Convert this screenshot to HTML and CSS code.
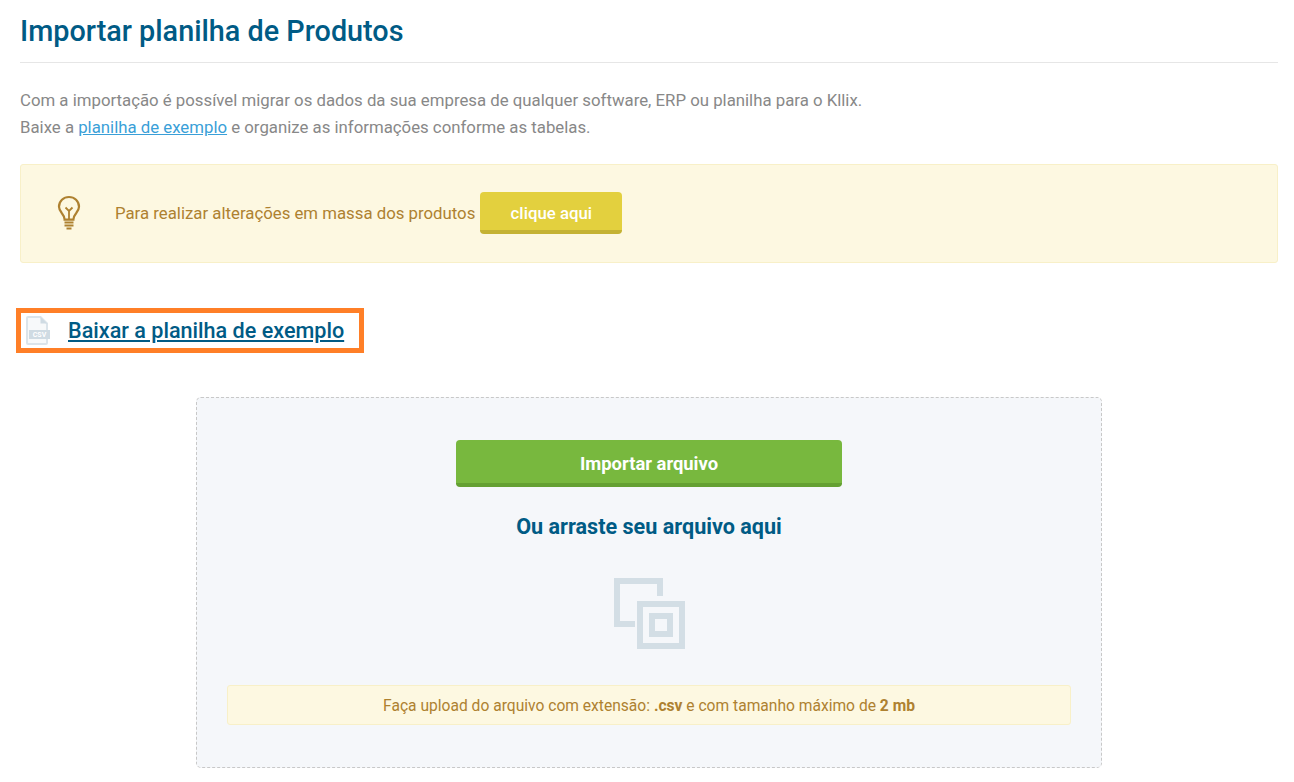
FILE: index.html
```html
<!DOCTYPE html>

<html lang="pt-BR">

<head>
	<meta charset="UTF-8">
	<title>Importar planilha de Produtos</title>
	<link rel="stylesheet" href="styles.css">
</head>

<body>

	<h1 class="page-title">Importar planilha de Produtos</h1>

	<p class="intro">
		Com a importação é possível migrar os dados da sua empresa de qualquer software, ERP ou planilha para o Kllix.
		<br/>
		Baixe a <a href="#">planilha de exemplo</a> e organize as informações conforme as tabelas.
	</p>

	<div class="tip">
		<svg class="tip-icon" xmlns="http://www.w3.org/2000/svg" width="26" height="36" viewBox="0 0 26 36" fill="none" stroke="currentColor">
			<path stroke-width="2.2" d="M8.600 24.600c0-3.200-1.200-4.600-3-6.800C4.200 16 3 14.200 3 11.800 3 6.200 7.500 2 13 2s10 4.200 10 9.800c0 2.400-1.200 4.200-2.600 6-1.800 2.200-3 3.600-3 6.800z"/>
			<path stroke-width="1.800" d="M13 24.500v-9M9.500 12.500l3.500 3.500 3.500-3.500"/>
			<path stroke-width="2" d="M8.500 27.500h9M8.500 30.500h9M10.500 33.500h5"/>
		</svg>
		<span>Para realizar alterações em massa dos produtos</span>
		<a href="#" class="btn btn-yellow">clique aqui</a>
	</div>

	<div class="download">
		<svg xmlns="http://www.w3.org/2000/svg" width="24" height="29" viewBox="0 0 24 29">
			<path d="M2 1h12.500l6.500 6.500V27a1 1 0 0 1-1 1H2a1 1 0 0 1-1-1V2a1 1 0 0 1 1-1z" fill="#f7f9fa" stroke="#dbe4ea" stroke-width="2"/>
			<path d="M14.500 1v6.500H21z" fill="#cfdbe3"/>
			<rect x="3" y="14" width="21" height="9" fill="#cfdbe3"/>
			<text x="13.500" y="21.300" class="csv-label">CSV</text>
		</svg>
		<a href="#">Baixar a planilha de exemplo</a>
	</div>

	<div class="dropzone">
		<a href="#" class="btn btn-green">Importar arquivo</a>
		<h2>Ou arraste seu arquivo aqui</h2>
		<svg class="drop-icon" xmlns="http://www.w3.org/2000/svg" width="71" height="71" viewBox="0 0 71 71" fill="none" stroke="#d3dee5" stroke-width="6">
			<path d="M46 18V3H3v43h18"/>
			<rect x="26" y="26" width="42" height="42"/>
			<rect x="38" y="38" width="18" height="18"/>
		</svg>
		<div class="notice">Faça upload do arquivo com extensão: <b>.csv</b> e com tamanho máximo de <b>2 mb</b></div>
	</div>

</body>

</html>
```

FILE: styles.css
```css
*, *:after, *:before { box-sizing: border-box; }
html, body { margin: 0; padding: 0; }
body { padding: 0 16px 14px 20px; font-family: Roboto, sans-serif; font-size: 16.8px; color: #888; background: #fff; }

/* header */
.page-title { margin: 0; padding: 13px 0 12px; font-size: 28.8px; line-height: 37px; font-weight: 500; color: #005b85; border-bottom: 1px solid #e6e6e6; }
.intro { margin: 24px 0 23px; line-height: 27px; }
.intro a { color: #3a9fd8; }

/* tip */
.tip { display: flex; align-items: center; height: 99px; padding: 0 0 1px 35px; color: #ae8130; background: #fdf8e1; border: 1px solid #f8f0c8; border-radius: 3px; }
.tip-icon { margin-right: 33px; }
.tip span { margin-right: 5px; }

/* buttons */
.btn { display: block; color: #fff; font-weight: 700; text-align: center; text-decoration: none; border-radius: 4px; }
.btn-yellow { width: 142px; height: 42px; line-height: 42px; font-size: 16.8px; font-weight: 500; background: #e3d03e; border-bottom: 4px solid #c4b234; }
.btn-green { width: 386px; height: 47px; line-height: 47px; font-size: 18.4px; background: #78b83e; border-bottom: 4px solid #64a032; }

/* download link */
.download { display: flex; align-items: center; width: 348px; height: 45px; margin: 45px 0 44px -4px; padding: 0 0 0 5px; border: 5px solid #ff7f27; }
.download a { margin-left: 18px; font-size: 21.6px; font-weight: 500; color: #005b85; }
.csv-label { font-family: Roboto, sans-serif; font-size: 7px; font-weight: 700; fill: #fff; text-anchor: middle; }

/* dropzone */
.dropzone { display: flex; flex-direction: column; align-items: center; width: 906px; height: 371px; margin: 0 auto; padding-top: 42px; background: #f5f7fa; border: 1px dashed #c8c8c8; border-radius: 5px; }
.dropzone h2 { margin: 25px 0 0; font-size: 21.6px; line-height: 30px; font-weight: 700; color: #005b85; }
.drop-icon { margin-top: 36px; }
.notice { width: 844px; height: 40px; margin-top: 36px; padding-top: 1px; line-height: 38px; font-size: 15.6px; text-align: center; color: #ae8130; background: #fdf8e1; border: 1px solid #f8f0c8; border-radius: 3px; }
```
